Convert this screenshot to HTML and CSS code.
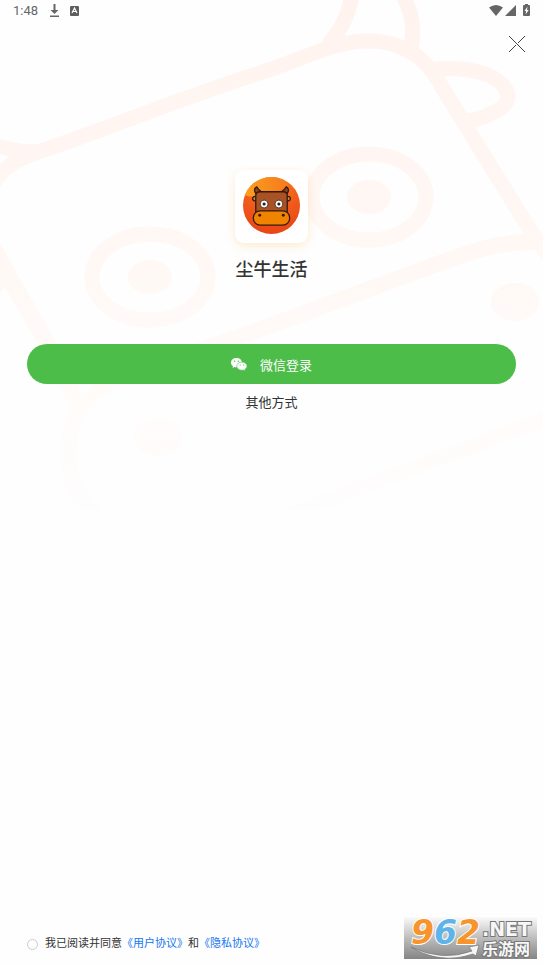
FILE: index.html
```html
<!DOCTYPE html>
<html lang="zh-CN">
<head>
<meta charset="utf-8">
<meta name="viewport" content="width=device-width, initial-scale=1">
<title>尘牛生活</title>
<link rel="stylesheet" href="styles.css">
</head>
<body>
<svg class="backdrop" viewBox="0 0 543 510" aria-hidden="true">
  <defs>
    <linearGradient id="fade" gradientUnits="userSpaceOnUse" x1="0" y1="0" x2="0" y2="510">
      <stop offset="0" stop-color="#fff3ef"/>
      <stop offset=".5" stop-color="#fff8f5"/>
      <stop offset=".8" stop-color="#fffcfa"/>
      <stop offset="1" stop-color="#fefdfd"/>
    </linearGradient>
  </defs>
  <g fill="none" stroke="url(#fade)" stroke-width="15">
    <path d="M-12 196C-4 172 10 162 38 152C110 128 180 98 272 69L325 49C362 36 398 38 424 62C436 74 440 84 448 97L532 233L550 258"/>
    <path d="M-10 144C6 147 18 154 40 151"/>
    <path d="M352 -4C348 16 342 28 328 45M402 -6C412 12 415 28 411 50"/>
    <path d="M434 69C466 67 490 72 503 85C512 97 508 107 490 114C483 118 475 120 466 121"/>
    <path d="M-10 242L5 270L45 340L80 408" stroke-width="17"/>
    <path d="M-8 292C-2 282 4 278 12 278"/>
    <path d="M550 243C505 238 474 251 440 263L272 325L195 352C150 366 105 375 84 405C65 430 62 472 82 500L96 514" stroke-width="16"/>
    <path d="M550 417L290 514"/>
    <ellipse cx="369" cy="197" rx="57" ry="43"/>
    <ellipse cx="150" cy="277" rx="58" ry="43"/>
  </g>
  <g fill="url(#fade)">
    <ellipse cx="369" cy="197" rx="22" ry="17"/>
    <ellipse cx="150" cy="277" rx="22" ry="17"/>
    <ellipse cx="158" cy="437" rx="24" ry="19"/>
    <ellipse cx="515" cy="302" rx="24" ry="19"/>
  </g>
</svg>

<header class="status">
  <span class="time">1:48</span>
  <svg class="status-download" width="11" height="14" viewBox="0 0 11 14" aria-hidden="true"><path d="M4.500 0h2v6H9.500L5.500 10 1.500 6h3zM1 11.500h9v1.500H1z" fill="#666"/></svg>
  <svg class="status-app" width="9" height="10" viewBox="0 0 9 10" aria-hidden="true"><rect width="9" height="10" rx="1" fill="#5f5f5f"/><path d="M2 7L4.500 2 7 7M3 5.500h3" fill="none" stroke="#fff" stroke-width="1.200"/></svg>
  <svg class="status-right" width="41" height="14" viewBox="0 0 41 14" aria-hidden="true">
    <g fill="#666">
      <path d="M0 3.500Q7 -1.500 14 3.500L7 12z"/>
      <path d="M27 1v11H16z"/>
      <path d="M35 1h1V0h3v1h1q1 0 1 1v9q0 1-1 1h-5q-1 0-1-1V2q0-1 1-1z"/>
    </g>
    <path d="M38.500 2.500L35.500 7h1.600l-.5 3.500L39.700 6H38z" fill="#fff"/>
  </svg>
</header>

<div class="toolbar">
  <button class="close" type="button" aria-label="关闭">
    <svg width="18" height="18" viewBox="0 0 18 18" aria-hidden="true"><path d="M1 1l16 16M17 1l-7 7M8 10l-7 7" fill="none" stroke="#444" stroke-width="1"/></svg>
  </button>
</div>

<main class="login">
  <div class="logo">
    <svg width="57" height="57" viewBox="0 0 58 58" aria-hidden="true">
      <defs>
        <radialGradient id="glow" cx=".5" cy=".1" r=".9"><stop offset="0" stop-color="#f98a1c"/><stop offset=".55" stop-color="#f15c1b"/><stop offset="1" stop-color="#e94516"/></radialGradient>
        <linearGradient id="sun" x1="0" y1="0" x2="1" y2="0"><stop offset="0" stop-color="#fba21f"/><stop offset="1" stop-color="#f57a1c"/></linearGradient>
        <clipPath id="disc"><circle cx="29" cy="29" r="29"/></clipPath>
      </defs>
      <g clip-path="url(#disc)">
        <rect width="58" height="58" fill="url(#glow)"/>
        <path d="M0 18Q24 26 46 8L40 0H0z" fill="url(#sun)"/>
      </g>
      <g stroke="#36180d" stroke-width="1.300" stroke-linejoin="round">
        <path d="M13 17Q10 12 14 10Q16 14 19 15zM45 17Q48 12 44 10Q42 14 39 15z" fill="#854521"/>
        <path d="M14 20Q9 19 10 23Q11 25 14 24zM44 20Q49 19 48 23Q47 25 44 24z" fill="#d9822b"/>
        <path d="M17 15H41Q45 15 45 19V38H13V19Q13 15 17 15z" fill="#a85226"/>
        <rect x="10.500" y="34.500" width="37" height="14.500" rx="7" fill="#f08300"/>
      </g>
      <g fill="#fff" stroke="#36180d" stroke-width=".8"><circle cx="21.500" cy="27.500" r="4"/><circle cx="36.500" cy="27.500" r="4"/></g>
      <g fill="#36180d"><circle cx="21.500" cy="27.500" r="1.600"/><circle cx="36.500" cy="27.500" r="1.600"/><circle cx="17" cy="39" r="1.500"/><circle cx="41" cy="39" r="1.500"/></g>
    </svg>
  </div>
  <h1 class="name">尘牛生活</h1>
  <button class="wechat" type="button">
    <svg width="16" height="13" viewBox="0 0 16 13" aria-hidden="true">
      <path d="M5.500 0C2.300 0 0 2 0 4.700c0 1.500.8 2.700 2 3.500L1.500 10l2-1c.7.200 1.400.3 2 .3C8.700 9.300 11 7.300 11 4.700S8.600 0 5.500 0z" fill="#fff"/>
      <path d="M10.800 4.100C7.900 4.100 5.800 5.900 5.800 8.200s2.100 4 5 4c.6 0 1.200-.1 1.700-.2l1.800.9-.4-1.600C15.200 10.600 16 9.500 16 8.200c0-2.300-2.200-4.100-5.200-4.100z" fill="#fff" stroke="#4dbd4a" stroke-width=".6"/>
      <g fill="#4dbd4a"><circle cx="3.700" cy="3.200" r=".7"/><circle cx="7.300" cy="3.200" r=".7"/><circle cx="9.200" cy="7" r=".6"/><circle cx="12.500" cy="7" r=".6"/></g>
    </svg>
    <span>微信登录</span>
  </button>
  <button class="other" type="button">其他方式</button>
</main>

<footer class="agreement">
  <input type="checkbox" id="agree">
  <p><label for="agree">我已阅读并同意</label><a href="#terms">《用户协议》</a>和<a href="#privacy">《隐私协议》</a></p>
</footer>

<div class="watermark">
  <svg width="133" height="42" viewBox="0 0 133 42" role="img" aria-label="962.NET 乐游网">
    <defs>
      <linearGradient id="steel" x1="0" y1="0" x2="0" y2="1"><stop offset="0" stop-color="#fafafa"/><stop offset=".5" stop-color="#bdbdbd"/><stop offset="1" stop-color="#858585"/></linearGradient>
    </defs>
    <rect width="133" height="42" fill="url(#steel)"/>
    <path d="M7 30Q38 45 68 34L65 30L75 28L72 39L69 37Q36 48 7 30z" fill="#f5f5f5" stroke="#777" stroke-width=".7"/>
    <g class="mark-digits">
      <text x="7" y="27" fill="#f7942b">9</text>
      <text x="30" y="27" fill="#5eb4e8">6</text>
      <text x="53" y="27" fill="#f7942b">2</text>
    </g>
    <text class="mark-net" x="78" y="19">.NET</text>
    <text class="mark-cn" x="78" y="38">乐游网</text>
  </svg>
</div>
</body>
</html>
```
FILE: styles.css
```css
* {
  box-sizing: border-box;
}

body {
  position: relative;
  display: flex;
  flex-direction: column;
  min-height: 100vh;
  margin: 0;
  overflow-x: hidden;
  background: #fefefe;
  color: #333;
  font-family: Roboto, "Noto Sans CJK SC", sans-serif;
}

button {
  padding: 0;
  border: 0;
  background: none;
  color: inherit;
  font: inherit;
  cursor: pointer;
}

svg {
  display: block;
}

.backdrop {
  position: absolute;
  top: 0;
  left: 0;
  z-index: -1;
  width: 100%;
}

.status {
  display: flex;
  align-items: center;
  height: 22px;
  padding: 0 13px;
}

.time {
  color: #666;
  font-size: 13px;
  line-height: 22px;
}

.status-download {
  margin-left: 11px;
}

.status-app {
  margin-left: 10px;
}

.status-right {
  margin-left: auto;
}

.toolbar {
  display: flex;
  justify-content: flex-end;
  padding: 13px 17px 0;
}

.login {
  display: flex;
  flex-direction: column;
  align-items: center;
  padding: 117px 27px 0;
}

.logo {
  display: grid;
  place-items: center;
  width: 73px;
  height: 73px;
  padding-bottom: 2px;
  border-radius: 9px;
  background: #fff;
  box-shadow: 0 3px 10px rgba(250, 170, 70, .24);
}

.name {
  margin: 13px 0 0;
  font-size: 18px;
  font-weight: 500;
  line-height: 28px;
}

.wechat {
  display: flex;
  align-items: center;
  justify-content: center;
  gap: 13px;
  width: 100%;
  height: 40px;
  margin-top: 60px;
  border-radius: 20px;
  background: #4dbd4a;
  color: #fff;
  font-size: 13px;
}

.other {
  margin-top: 9px;
  font-size: 13px;
  line-height: 20px;
}

.agreement {
  display: flex;
  align-items: center;
  gap: 7px;
  margin-top: auto;
  padding: 0 27px 12px;
  font-size: 11px;
  line-height: 18px;
}

.agreement input {
  width: 11px;
  height: 11px;
  margin: 0;
  border: 1px solid #ccc;
  border-radius: 50%;
  appearance: none;
}

.agreement input:checked {
  background: #4dbd4a;
}

.agreement p {
  margin: 0;
}

.agreement a {
  color: #1677ee;
  text-decoration: none;
}

.watermark {
  position: absolute;
  right: 6px;
  bottom: 6px;
}

.watermark svg {
  overflow: visible;
}

.mark-digits {
  font: italic 700 33px "DejaVu Sans", sans-serif;
  stroke: #fff;
  stroke-width: 2px;
  paint-order: stroke;
}

.mark-net,
.mark-cn {
  fill: #f7f7f7;
  stroke: #777;
  stroke-width: 2px;
  paint-order: stroke;
}

.mark-net {
  font: 700 19px "DejaVu Sans", sans-serif;
}

.mark-cn {
  font: 700 16px "Noto Sans CJK SC", sans-serif;
}
```
